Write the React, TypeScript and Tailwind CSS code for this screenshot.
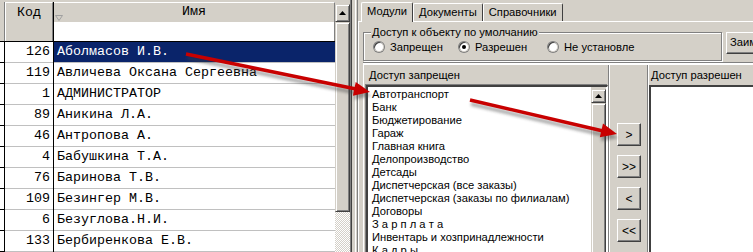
import React from "react";

const rows: [number, string][] = [
  [126, "Аболмасов И.В."],
  [119, "Авличева Оксана Сергеевна"],
  [1, "АДМИНИСТРАТОР"],
  [89, "Аникина Л.А."],
  [46, "Антропова А."],
  [4, "Бабушкина Т.А."],
  [76, "Баринова Т.В."],
  [109, "Безингер М.В."],
  [6, "Безуглова.Н.И."],
  [133, "Бербиренкова Е.В."],
];

const modules = [
  "Автотранспорт",
  "Банк",
  "Бюджетирование",
  "Гараж",
  "Главная книга",
  "Делопроизводство",
  "Детсады",
  "Диспетчерская (все заказы)",
  "Диспетчерская (заказы по филиалам)",
  "Договоры",
  "З а р п л а т а",
  "Инвентарь и хозпринадлежности",
  "К а д р ы",
];

function UpArrow() {
  return (
    <svg width="7" height="4" viewBox="0 0 7 4">
      <polygon points="3.5,0 7,4 0,4" fill="#000" />
    </svg>
  );
}

function Radio({ checked, label }: { checked?: boolean; label: string }) {
  return (
    <div className="flex items-center gap-[5px]">
      <div className="w-[12px] h-[12px] rounded-full bg-[#808080] p-[1px] flex">
        <div className="flex-1 rounded-full bg-white shadow-[inset_1px_1px_0_#404040] border-r border-b border-[#d4d0c8] flex items-center justify-center">
          {checked && <div className="w-[4px] h-[4px] rounded-full bg-black" />}
        </div>
      </div>
      <span>{label}</span>
    </div>
  );
}

function SmallBtn({ label }: { label: string }) {
  return (
    <div className="w-[24px] h-[23px] bg-[#d4d0c8] border border-t-white border-l-white border-r-[#404040] border-b-[#404040] shadow-[inset_-1px_-1px_0_#808080] flex items-center justify-center text-[12px] leading-none">
      {label}
    </div>
  );
}

function Arrows() {
  return (
    <svg className="absolute inset-0 pointer-events-none" width="753" height="252" viewBox="0 0 753 252">
      <defs>
        <filter id="blur" x="-10%" y="-50%" width="120%" height="200%">
          <feGaussianBlur stdDeviation="1.6" />
        </filter>
      </defs>
      <g filter="url(#blur)" opacity="0.45" transform="translate(1,4)">
        <line x1="186" y1="54" x2="356" y2="89" stroke="#404040" strokeWidth="3.5" />
        <polygon points="370,92 352.9,95.7 355.7,81.9" fill="#404040" />
        <line x1="470" y1="100" x2="603" y2="131" stroke="#404040" strokeWidth="3.5" />
        <polygon points="617,134 599.8,137.2 603,123.6" fill="#404040" />
      </g>
      <line x1="186" y1="54" x2="356" y2="89" stroke="#c80000" strokeWidth="3.5" />
      <polygon points="370,92 352.9,95.7 355.7,81.9" fill="#c80000" />
      <line x1="470" y1="100" x2="603" y2="131" stroke="#c80000" strokeWidth="3.5" />
      <polygon points="617,134 599.8,137.2 603,123.6" fill="#c80000" />
    </svg>
  );
}

export default function App() {
  return (
    <div className="relative w-[753px] h-[252px] overflow-hidden bg-[#d4d0c8] flex font-['Liberation_Sans',Arial,sans-serif] text-[11.2px] text-black">
      {/* Grid */}
      <div className="w-[335px] shrink-0 flex flex-col bg-white font-['Liberation_Mono','Courier_New',monospace] text-[13.33px]">
        <div className="h-[42px] flex bg-[#d4d0c8] pt-[2px] border-b border-black">
          <div className="w-[5px] border-r border-[#808080]" />
          <div className="w-[48px] border-t border-l border-t-white border-l-white border-r border-r-[#808080] text-center leading-[20px]">
            Код
          </div>
          <div className="w-[1px] bg-black" />
          <div className="flex-1 flex flex-col">
            <div className="relative h-[20px] border-t border-t-white border-r border-r-[#808080] text-center leading-[18px]">
              Имя
              <svg className="absolute left-[1px] top-[12px]" width="8" height="6" viewBox="0 0 8 6">
                <polygon points="0.5,0.5 7.5,0.5 4,5.5" fill="none" stroke="#a0a0a0" strokeWidth="1" />
              </svg>
            </div>
            <div className="flex-1 bg-white border-r border-[#808080]" />
          </div>
        </div>
        {rows.map(([code, name], i) => (
          <div key={code} className="flex h-[21px] shrink-0">
            <div className="w-[5px] border-r border-b border-black" />
            <div className="w-[48px] border-b border-[#c0c0c0] text-right pr-[3px] leading-[20px]">{code}</div>
            <div className="w-[1px] bg-black" />
            <div
              className={
                i === 0
                  ? "flex-1 border-b border-[#c0c0c0] pl-[3px] leading-[20px] bg-[#0a246a] text-white"
                  : "flex-1 border-b border-[#c0c0c0] pl-[3px] leading-[20px]"
              }
            >
              {name}
            </div>
          </div>
        ))}
      </div>
      {/* grid scrollbar */}
      <div className="w-[15px] shrink-0 flex flex-col bg-[#d4d0c8] pt-[4px]">
        <div className="h-[18px] border border-t-[#d4d0c8] border-l-[#d4d0c8] border-r-[#404040] border-b-[#404040] shadow-[inset_1px_1px_0_#fff,inset_-1px_-1px_0_#808080] flex items-center justify-center">
          <UpArrow />
        </div>
        <div className="h-[190px] border border-t-[#d4d0c8] border-l-[#d4d0c8] border-r-[#404040] border-b-[#404040] shadow-[inset_1px_1px_0_#fff,inset_-1px_-1px_0_#808080]" />
        <div className="flex-1 bg-[repeating-conic-gradient(#ffffff_0_25%,#d4d0c8_0_50%)] bg-[length:2px_2px]" />
      </div>
      {/* splitter */}
      <div className="w-[8px] shrink-0 flex">
        <div className="w-[1px] bg-[#808080]" />
        <div className="w-[1px] bg-[#404040]" />
        <div className="w-[3px] bg-[#d4d0c8]" />
        <div className="w-[1px] bg-white" />
        <div className="w-[1px] bg-[#d4d0c8]" />
        <div className="w-[1px] bg-[#808080]" />
      </div>
      {/* right */}
      <div className="flex-1 flex flex-col min-w-0 overflow-hidden">
        <div className="h-[21px] flex items-end pl-[3px] shrink-0">
          <div className="h-[20px] px-[5px] border-t border-l border-white border-r border-r-[#404040] rounded-t-[2px] leading-[17px] z-10 bg-[#d4d0c8] -mb-[1px]">
            Модули
          </div>
          <div className="h-[18px] px-[5px] border-t border-l border-white border-r border-r-[#404040] rounded-t-[2px] leading-[16px]">
            Документы
          </div>
          <div className="h-[18px] px-[5px] border-t border-l border-white border-r border-r-[#404040] rounded-t-[2px] leading-[16px]">
            Справочники
          </div>
        </div>
        <div className="flex-1 flex flex-col border-t border-l border-white pl-[4px] pt-[7px] min-h-0">
          <div className="flex shrink-0">
            <div className="relative w-[359px] shrink-0 h-[29px] mt-[3px] border border-[#808080] shadow-[inset_1px_1px_0_#fff,1px_1px_0_#fff]">
              <div className="absolute -top-[8px] left-[7px] bg-[#d4d0c8] px-[1px] leading-[14px]">
                Доступ к объекту по умолчанию
              </div>
              <div className="absolute left-[9px] top-[7px] flex items-center leading-[14px]">
                <div className="w-[85px]"><Radio label="Запрещен" /></div>
                <div className="w-[89px]"><Radio checked label="Разрешен" /></div>
                <div className="w-[100px] whitespace-nowrap"><Radio label="Не установле" /></div>
              </div>
            </div>
            <div className="ml-[4px] mt-[3px] w-[80px] h-[22px] shrink-0 border border-t-white border-l-white border-r-[#404040] border-b-[#404040] shadow-[inset_-1px_-1px_0_#808080] pl-[3px] leading-[19px] overflow-hidden whitespace-nowrap">
              Заим
            </div>
          </div>
          <div className="mt-[1px] h-[2px] border-t border-[#808080] border-b border-b-white shrink-0" />
          <div className="flex-1 flex min-h-0 border-t border-white">
            {/* left list panel */}
            <div className="w-[245px] shrink-0 flex flex-col border-l border-white">
              <div className="h-[20px] pl-[5px] leading-[20px] shrink-0">Доступ запрещен</div>
              <div className="flex-1 ml-[2px] flex border-t-2 border-l-2 border-t-[#404040] border-l-[#404040] border-r border-r-white shadow-[-1px_-1px_0_#808080] bg-white">
                <div className="flex-1 pl-[4px] pt-[1px] leading-[13px] whitespace-nowrap overflow-hidden">
                  {modules.map((m) => (
                    <div key={m}>{m}</div>
                  ))}
                </div>
                <div className="w-[15px] bg-[#d4d0c8] flex flex-col pt-[2px] mr-[1px]">
                  <div className="h-[14px] border border-t-[#d4d0c8] border-l-[#d4d0c8] border-r-[#404040] border-b-[#404040] shadow-[inset_1px_1px_0_#fff,inset_-1px_-1px_0_#808080] flex items-center justify-center">
                    <UpArrow />
                  </div>
                  <div className="flex-1 border border-t-[#d4d0c8] border-l-[#d4d0c8] border-r-[#404040] border-b-0 shadow-[inset_1px_1px_0_#fff,inset_-1px_0_0_#808080]" />
                </div>
              </div>
            </div>
            {/* middle buttons */}
            <div className="w-[40px] shrink-0 flex flex-col items-start pl-[8px] pt-[58px] gap-[9px] border-l border-[#808080] shadow-[inset_1px_0_0_#fff] border-r border-r-[#808080]">
              <SmallBtn label=">" />
              <SmallBtn label=">>" />
              <SmallBtn label="<" />
              <SmallBtn label="<<" />
            </div>
            {/* right list panel */}
            <div className="flex-1 flex flex-col border-l border-white min-w-0">
              <div className="h-[20px] pl-[2px] leading-[20px] shrink-0 whitespace-nowrap">Доступ разрешен</div>
              <div className="flex-1 flex border-t-2 border-l-2 border-t-[#404040] border-l-[#404040] bg-white" />
            </div>
          </div>
        </div>
      </div>
      <Arrows />
    </div>
  );
}
